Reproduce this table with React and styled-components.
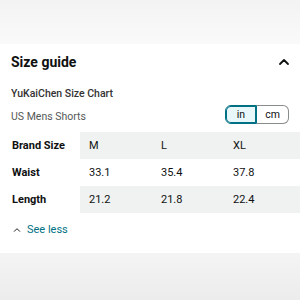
import styled, { createGlobalStyle } from "styled-components";

const GlobalStyle = createGlobalStyle`
  html, body {
    margin: 0;
    padding: 0;
    background: #ffffff;
  }
  body {
    font-family: Roboto, "Noto Sans", Arial, sans-serif;
    color: #0f1111;
    width: 300px;
    height: 300px;
    overflow: hidden;
  }
`;

const Page = styled.div`
  display: flex;
  flex-direction: column;
  height: 300px;
`;

const Shade = styled.div`
  height: ${(p) => p.$h}px;
  flex-shrink: 0;
  background: ${(p) =>
    p.$top
      ? "linear-gradient(to bottom, #f3f3f3, #fafafa)"
      : "linear-gradient(to bottom, #f4f4f4, #ececec)"};
`;

const Card = styled.section`
  background: #ffffff;
  padding: 0 0 0 11px;
  flex: 1;
  display: flex;
  flex-direction: column;
`;

const Header = styled.div`
  display: flex;
  align-items: center;
  justify-content: space-between;
  height: 36px;
  padding-right: 10px;
`;

const Title = styled.h2`
  margin: 0;
  font-size: 14px;
  font-weight: 700;
  color: #0f1111;
`;

const Chart = styled.div`
  font-size: 10.5px;
  font-weight: 500;
  color: #333333;
  margin-top: 6px;
  height: 16px;
  line-height: 16px;
`;

const SubRow = styled.div`
  display: flex;
  align-items: center;
  justify-content: space-between;
  padding-right: 11px;
  margin-top: 2px;
  height: 21px;
`;

const Sub = styled.span`
  font-size: 10.5px;
  color: #565959;
  padding-top: 4px;
`;

const Toggle = styled.div`
  display: flex;
  height: 19px;
`;

const Seg = styled.button`
  width: 32px;
  height: 19px;
  padding: 0;
  font-family: inherit;
  font-size: 10.5px;
  color: #0f1111;
  background: ${(p) => (p.$on ? "#e8f8fa" : "#ffffff")};
  border: 1px solid ${(p) => (p.$on ? "#007185" : "#888c8c")};
  border-radius: ${(p) => (p.$first ? "6px 0 0 6px" : "0 6px 6px 0")};
  box-shadow: ${(p) => (p.$on ? "inset 0 0 0 1px #007185" : "none")};
  ${(p) => !p.$first && "border-left: none;"}
`;

const Table = styled.div`
  display: grid;
  grid-template-columns: 69px 72px 72px 1fr;
  margin-top: 7px;
`;

const Cell = styled.div`
  height: 27px;
  display: flex;
  align-items: center;
  padding-left: ${(p) => (p.$label ? "1px" : "9px")};
  font-size: 11px;
  font-weight: ${(p) => (p.$label ? 700 : 400)};
  color: #0f1111;
  background: ${(p) => (p.$shade ? "#f0f2f2" : "#ffffff")};
`;

const SeeLess = styled.a`
  display: flex;
  align-items: center;
  gap: 6px;
  margin-top: 10px;
  margin-left: 2px;
  font-size: 11px;
  color: #007185;
  text-decoration: none;
`;

const Chevron = ({ size, stroke }) => (
  <svg width={size} height={size} viewBox="0 0 12 12">
    <path
      d="M2 8 L6 4 L10 8"
      fill="none"
      stroke="#0f1111"
      strokeWidth={stroke}
      strokeLinecap="round"
      strokeLinejoin="round"
    />
  </svg>
);

const rows = [
  ["Brand Size", "M", "L", "XL"],
  ["Waist", "33.1", "35.4", "37.8"],
  ["Length", "21.2", "21.8", "22.4"],
];

export default function App() {
  return (
    <>
      <GlobalStyle />
      <Page>
        <Shade $top $h={44} />
        <Card>
          <Header>
            <Title>Size guide</Title>
            <Chevron size={12} stroke={1.8} />
          </Header>
          <Chart>YuKaiChen Size Chart</Chart>
          <SubRow>
            <Sub>US Mens Shorts</Sub>
            <Toggle>
              <Seg $on $first>in</Seg>
              <Seg>cm</Seg>
            </Toggle>
          </SubRow>
          <Table>
            {rows.map((r, i) =>
              r.map((c, j) => (
                <Cell key={`${i}-${j}`} $label={j === 0} $shade={j > 0 && i !== 1}>
                  {c}
                </Cell>
              ))
            )}
          </Table>
          <SeeLess href="#">
            <Chevron size={8} stroke={1.4} />
            See less
          </SeeLess>
        </Card>
        <Shade $h={47} />
      </Page>
    </>
  );
}
